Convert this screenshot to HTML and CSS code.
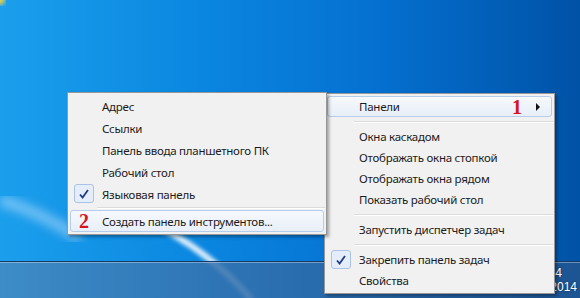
FILE: index.html
```html
<!DOCTYPE html>
<html lang="ru">
<head>
    <meta charset="UTF-8">
    <title>Панель задач — контекстное меню</title>
    <link rel="stylesheet" href="styles.css">
</head>
<body>
    <div class="desktop">
        <svg class="beams" width="580" height="298" viewBox="0 0 580 298">
            <defs>
                <filter id="soft"><feGaussianBlur stdDeviation="2"/></filter>
                <filter id="wide"><feGaussianBlur stdDeviation="5"/></filter>
            </defs>
            <path d="M0 200 Q 40 212 80 238" stroke="#cfe9ff" stroke-width="12" fill="none" opacity="0.45" filter="url(#wide)"/>
            <path d="M130 212 Q 205 245 252 300" stroke="#ffffff" stroke-width="6" fill="none" opacity="0.9" filter="url(#soft)"/>
            <circle cx="0" cy="0" r="5" fill="#e8d24a" filter="url(#soft)"/>
        </svg>
    </div>

    <div class="taskbar">
        <div class="clock">
            <span>13:34</span>
            <span>30.01.2014</span>
        </div>
    </div>

    <!-- main taskbar menu -->
    <div class="menu menu-main">
        <div class="item hot">
            <span class="gutter"></span>
            <span class="label">Панели</span>
            <span class="num">1</span>
            <span class="arrow"></span>
        </div>
        <div class="sep"></div>
        <div class="item"><span class="gutter"></span><span class="label">Окна каскадом</span></div>
        <div class="item"><span class="gutter"></span><span class="label">Отображать окна стопкой</span></div>
        <div class="item"><span class="gutter"></span><span class="label">Отображать окна рядом</span></div>
        <div class="item"><span class="gutter"></span><span class="label">Показать рабочий стол</span></div>
        <div class="sep"></div>
        <div class="item"><span class="gutter"></span><span class="label">Запустить диспетчер задач</span></div>
        <div class="sep"></div>
        <div class="item">
            <span class="gutter"><span class="check"><svg width="12" height="12" viewBox="0 0 12 12"><path d="M2 6.5 L4.6 9.5 L10 2" stroke="#1d3c86" stroke-width="1.8" fill="none"/></svg></span></span>
            <span class="label">Закрепить панель задач</span>
        </div>
        <div class="item"><span class="gutter"></span><span class="label">Свойства</span></div>
    </div>

    <!-- "Панели" submenu -->
    <div class="menu menu-sub">
        <div class="item"><span class="gutter"></span><span class="label">Адрес</span></div>
        <div class="item"><span class="gutter"></span><span class="label">Ссылки</span></div>
        <div class="item"><span class="gutter"></span><span class="label">Панель ввода планшетного ПК</span></div>
        <div class="item"><span class="gutter"></span><span class="label">Рабочий стол</span></div>
        <div class="item">
            <span class="gutter"><span class="check"><svg width="12" height="12" viewBox="0 0 12 12"><path d="M2 6.5 L4.6 9.5 L10 2" stroke="#1d3c86" stroke-width="1.8" fill="none"/></svg></span></span>
            <span class="label">Языковая панель</span>
        </div>
        <div class="sep"></div>
        <div class="item hot">
            <span class="gutter"><span class="num">2</span></span>
            <span class="label">Создать панель инструментов...</span>
        </div>
    </div>
</body>
</html>
```

FILE: styles.css
```css
* {
    margin: 0;
    padding: 0;
    box-sizing: border-box;
}
body {
    width: 580px;
    height: 298px;
    position: relative;
    overflow: hidden;
    display: flex;
    flex-direction: column;
    font-family: "Noto Sans", "Open Sans", sans-serif;
    font-size: 11.5px;
    letter-spacing: -0.25px;
    color: #1b1b1b;
    background: linear-gradient(90deg, #1b9fec 0%, #0a86e0 35%, #0570d0 65%, #0052a6 100%);
}
.desktop {
    flex: 1;
}
.beams {
    position: absolute;
    top: 0;
    left: 0;
    pointer-events: none;
}
.taskbar {
    height: 37px;
    position: relative;
    border-top: 1px solid #163a66;
    box-shadow: inset 0 1px 0 rgba(255, 255, 255, 0.35);
    background: linear-gradient(90deg, rgba(70, 135, 190, 0.8) 0%, rgba(50, 110, 170, 0.85) 45%, rgba(32, 85, 145, 0.9) 100%);
    display: flex;
    justify-content: flex-end;
    align-items: center;
}
.clock {
    display: flex;
    flex-direction: column;
    align-items: center;
    padding-right: 3px;
    color: #fff;
    font-family: "Liberation Sans", sans-serif;
    font-size: 12px;
    letter-spacing: 0;
    line-height: 14px;
    text-shadow: 0 0 3px rgba(0, 0, 0, 0.5);
}

/* context menus */
.menu {
    position: absolute;
    background: #f1f1f1;
    border: 1px solid #979797;
    box-shadow: 2px 2px 3px rgba(0, 0, 0, 0.35);
    padding: 2px 1px;
}
.menu-main {
    left: 324px;
    top: 93px;
    width: 231px;
    z-index: 1;
}
.menu-sub {
    left: 67px;
    top: 92px;
    width: 260px;
    z-index: 2;
}
.item {
    display: flex;
    align-items: center;
    height: 21px;
    border: 1px solid transparent;
    border-radius: 3px;
    margin: 0 1px;
}
.menu-sub .item {
    height: 22px;
}
.item.hot {
    border-color: #b4cdea;
    background: linear-gradient(#f6f9fd, #e8eff8);
}
.gutter {
    width: 31px;
    height: 100%;
    display: flex;
    align-items: center;
    padding-left: 3px;
    flex-shrink: 0;
}
.menu-sub .gutter {
    align-items: flex-start;
    padding-top: 0;
}
.label {
    flex: 1;
    white-space: nowrap;
}
.check {
    width: 20px;
    height: 19px;
    border: 1px solid #a9c3e6;
    border-radius: 3px;
    background: #e4edf9;
    display: flex;
    justify-content: center;
    align-items: center;
}
.num {
    font-family: "Liberation Serif", serif;
    font-weight: bold;
    font-size: 20px;
    letter-spacing: 0;
    line-height: 1;
    color: #d8141c;
}
.menu-main .num {
    margin-right: 14px;
}
.menu-sub .num {
    margin-left: 5px;
}
.arrow {
    width: 0;
    height: 0;
    border-top: 4px solid transparent;
    border-bottom: 4px solid transparent;
    border-left: 4px solid #111;
    margin-right: 11px;
}
.sep {
    height: 9px;
    margin-left: 28px;
    display: flex;
    align-items: center;
}
.sep::after {
    content: "";
    flex: 1;
    border-top: 1px solid #dcdcdc;
    border-bottom: 1px solid #fff;
}
.menu-sub .sep {
    height: 5px;
}
```
